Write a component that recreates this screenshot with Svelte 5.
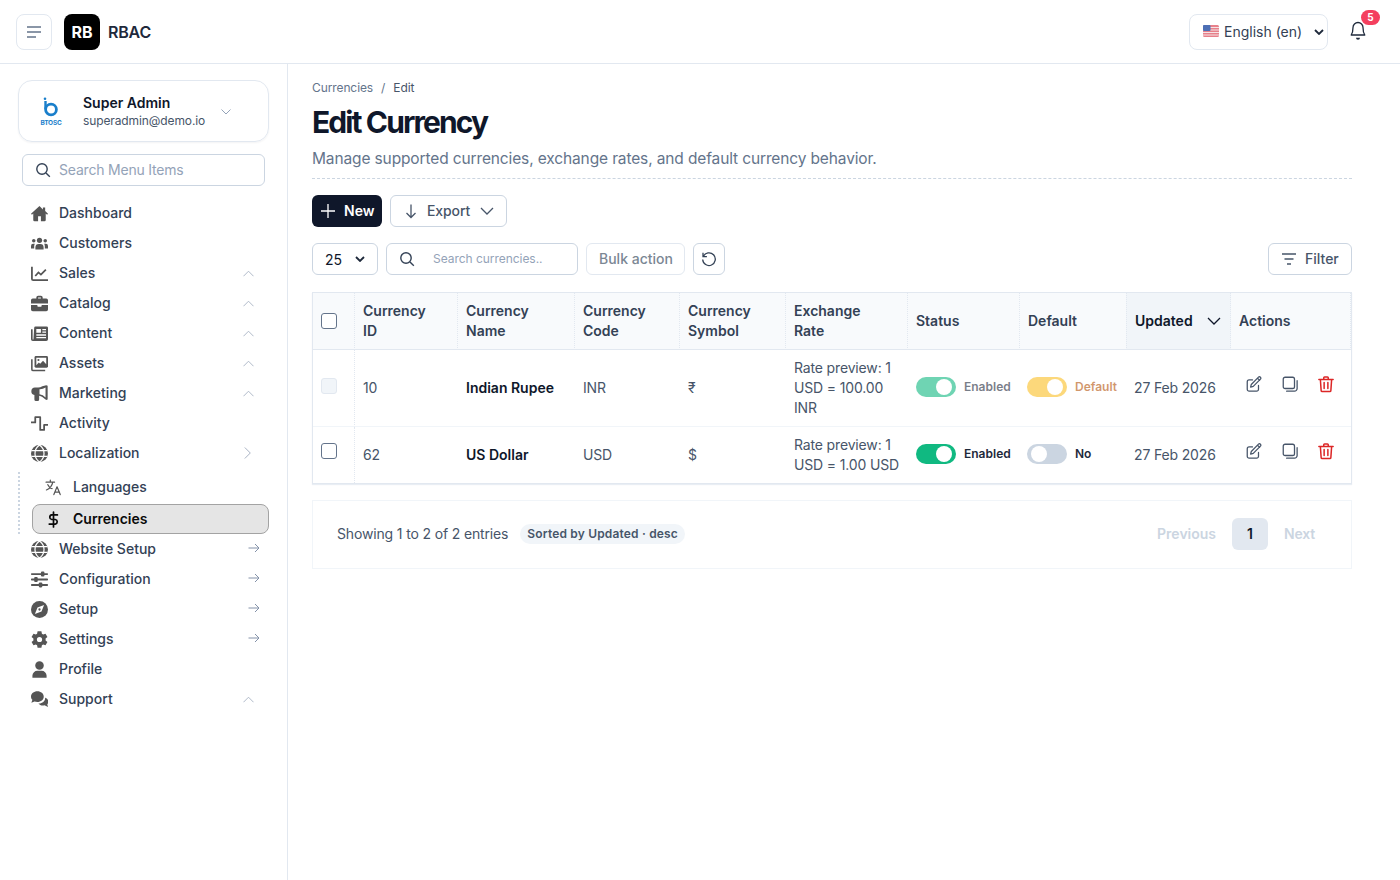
<script>
  const icons = {
    home: '<path fill="currentColor" d="M12 1.500 0 12.200l1.300 1.500 1.900-1.600V21a1.800 1.800 0 0 0 1.800 1.800h5V16h4v6.800h5a1.800 1.800 0 0 0 1.800-1.800v-8.900l1.900 1.600 1.300-1.500-4-3.600V3.500h-3.200v3Z"/>',
    users: '<g fill="currentColor"><circle cx="12" cy="7.500" r="3.700"/><path d="M6.200 20.500v-3A4.800 4.800 0 0 1 11 12.700h2a4.800 4.800 0 0 1 4.800 4.800v3Z"/><circle cx="3.900" cy="8" r="2.500"/><circle cx="20.100" cy="8" r="2.500"/><path d="M0 19v-3.500a3 3 0 0 1 3-3h2.400a6.500 6.500 0 0 0-.9 3.400V19ZM24 19v-3.500a3 3 0 0 0-3-3h-2.400a6.500 6.500 0 0 1 .9 3.400V19Z"/></g>',
    chart: '<path fill="none" stroke="currentColor" stroke-width="2.500" stroke-linejoin="round" d="M1.300 2.500v17.200a1.800 1.800 0 0 0 1.800 1.800H24"/><path fill="none" stroke="currentColor" stroke-width="2.500" d="m6 15.500 4.500-5 3.500 3 7-7"/>',
    brief: '<path fill="currentColor" d="M7.500 5V3.500A2.500 2.500 0 0 1 10 1h4a2.500 2.500 0 0 1 2.500 2.500V5h5A2.500 2.500 0 0 1 24 7.500V12H0V7.500A2.500 2.500 0 0 1 2.500 5ZM10 5h4V3.500h-4ZM0 14h9v1.500a1 1 0 0 0 1 1h4a1 1 0 0 0 1-1V14h9v6.500a2.500 2.500 0 0 1-2.500 2.500h-19A2.500 2.500 0 0 1 0 20.500Z"/>',
    news: '<path fill="currentColor" d="M6.500 2H22a2 2 0 0 1 2 2v16a2.500 2.500 0 0 1-2.500 2.500h-19A2.500 2.500 0 0 1 0 20V6h2.300v14a.6.6 0 0 0 1.200 0l1-16a2 2 0 0 1 2-2Z"/><path fill="#fff" d="M7.500 5.500h6.500V11H7.500ZM16 5.500h5.200v2H16ZM16 9h5.200v2H16ZM7.500 13h13.700v2H7.500ZM7.500 16.800h13.700v2H7.500Z"/>',
    images: '<path fill="currentColor" d="M7 1.500h15a2 2 0 0 1 2 2V16a2 2 0 0 1-2 2H7a2 2 0 0 1-2-2V3.500a2 2 0 0 1 2-2Z"/><path fill="#fff" d="M7.500 4h14v9l-4.500-5-4 4.500-2-2-3.500 4Z"/><circle cx="10.500" cy="7" r="1.500" fill="currentColor"/><path fill="none" stroke="currentColor" stroke-width="2.200" d="M1.200 6v14a2 2 0 0 0 2 2H20"/>',
    horn: '<path fill="currentColor" d="M23.500 1v19.500l-2 .8-5.500-4.300a10 10 0 0 0-4.500-1.900v5.400a2.200 2.200 0 0 1-2.200 2.200H7A2.200 2.200 0 0 1 4.800 20.500v-6.300A5.300 5.300 0 0 1 5.500 3.700h4.200a10 10 0 0 0 6.300-2L21.500.2Z"/><path fill="#fff" d="M12 6a13 13 0 0 0 8.500-2.500v14A13 13 0 0 0 12 13Z"/>',
    wave: '<path fill="none" stroke="currentColor" stroke-width="2.500" stroke-linejoin="round" d="M0 10.500h6V3h7v18h5.500v-7H24"/>',
    globe: '<circle cx="12" cy="12" r="12" fill="currentColor"/><path fill="none" stroke="#fff" stroke-width="1.700" d="M.5 8h23M.5 16h23M12 0c-8.500 6-8.500 18 0 24M12 0c8.500 6 8.500 18 0 24"/>',
    sliders: '<g fill="currentColor"><rect y="3" width="24" height="2.600" rx="1"/><rect y="10.700" width="24" height="2.600" rx="1"/><rect y="18.400" width="24" height="2.600" rx="1"/><rect x="14" y=".8" width="5" height="7" rx="1.500"/><rect x="4.500" y="8.500" width="5" height="7" rx="1.500"/><rect x="11" y="16.200" width="5" height="7" rx="1.500"/></g>',
    compass: '<circle cx="12" cy="12" r="12" fill="currentColor"/><path fill="#fff" d="m18.500 5.500-3.700 9.300-9.300 3.700 3.700-9.300Z"/><circle cx="12" cy="12" r="1.600" fill="currentColor"/>',
    gear: '<path fill="currentColor" fill-rule="evenodd" d="M9.300.5h5.400l.7 3.400 1.800 1 3.300-1.100 2.700 4.600-2.600 2.300v2.600l2.600 2.300-2.700 4.600-3.300-1.100-1.800 1-.7 3.400H9.300l-.7-3.400-1.800-1-3.300 1.100L.8 15.600l2.600-2.300v-2.600L.8 8.400l2.700-4.600 3.300 1.100 1.800-1ZM12 8.300a3.700 3.700 0 1 0 0 7.400 3.700 3.700 0 0 0 0-7.400Z"/>',
    user: '<circle cx="12" cy="6.500" r="6" fill="currentColor"/><path fill="currentColor" d="M2 23.500v-3A7 7 0 0 1 9 13.800h6a7 7 0 0 1 7 6.700v3Z"/>',
    chat: '<path fill="currentColor" d="M9 .5C4 .5 0 3.800 0 8c0 1.700.7 3.200 2 4.400L.5 16.500l4.500-1.800c1.200.4 2.600.7 4 .7 5 0 9-3.300 9-7.400S14 .5 9 .5Z"/><path fill="currentColor" d="M20 9.500c.2 4.800-4.200 8.500-9.500 8.100 1.300 1.800 3.500 2.900 6 2.900 1 0 1.800-.1 2.600-.4l4.900 2.400-1-3.800c1-1 1.500-2.200 1.500-3.700 0-2.300-1.600-4.400-4-5.500Z"/>',
    lang: '<g fill="none" stroke="currentColor" stroke-width="1.700" stroke-linejoin="round" stroke-linecap="round"><path d="M1.500 4.500h12M7.500 1.500v3M11 4.500c-1 5-4 9-9 11M4 8c1 2.500 3 4.500 6 5.500M12.500 22l4.500-11 4.500 11M14 18.500h6.500"/></g>',
    dollar: '<path fill="none" stroke="currentColor" stroke-width="2.400" stroke-linecap="round" d="M12 1.500v21M17.500 5.500H9.500a3.300 3.300 0 0 0 0 6.500h5a3.300 3.300 0 0 1 0 6.500H6"/>'
  };

  const upper = [
    { label: 'Dashboard', icon: 'home' },
    { label: 'Customers', icon: 'users' },
    { label: 'Sales', icon: 'chart', end: 'up' },
    { label: 'Catalog', icon: 'brief', end: 'up' },
    { label: 'Content', icon: 'news', end: 'up' },
    { label: 'Assets', icon: 'images', end: 'up' },
    { label: 'Marketing', icon: 'horn', end: 'up' },
    { label: 'Activity', icon: 'wave' },
    { label: 'Localization', icon: 'globe', end: 'right' }
  ];
  const lower = [
    { label: 'Website Setup', icon: 'globe', end: 'arrow' },
    { label: 'Configuration', icon: 'sliders', end: 'arrow' },
    { label: 'Setup', icon: 'compass', end: 'arrow' },
    { label: 'Settings', icon: 'gear', end: 'arrow' },
    { label: 'Profile', icon: 'user' },
    { label: 'Support', icon: 'chat', end: 'up' }
  ];

  const heads = [
    ['Currency', 'ID'], ['Currency', 'Name'], ['Currency', 'Code'], ['Currency', 'Symbol'], ['Exchange', 'Rate'], ['Status'], ['Default']
  ];

  const rows = [
    { id: 10, name: 'Indian Rupee', code: 'INR', sym: '₹', rate: 'Rate preview: 1 USD = 100.00 INR', locked: true, isDefault: true },
    { id: 62, name: 'US Dollar', code: 'USD', sym: '$', rate: 'Rate preview: 1 USD = 1.00 USD', locked: false, isDefault: false }
  ];
</script>

{#snippet navRow(item)}
  <div class="nav-row">
    <svg class="nav-icon" viewBox="0 0 24 24">{@html icons[item.icon]}</svg>
    <span>{item.label}</span>
    {#if item.end === 'up'}
      <svg class="end up" viewBox="0 0 12 7"><path d="M.5 6.500 6 1l5.500 5.500" /></svg>
    {:else if item.end === 'right'}
      <svg class="end side" viewBox="0 0 7 12"><path d="M.8.5 6.300 6 .8 11.500" /></svg>
    {:else if item.end === 'arrow'}
      <svg class="end arrow" viewBox="0 0 12 10"><path d="M.5 5h10.500M7 1l4 4-4 4" /></svg>
    {/if}
  </div>
{/snippet}

<div class="app">
  <header class="topbar">
    <button class="menu-btn" aria-label="Menu">
      <svg viewBox="0 0 16 12" width="16" height="12"><path d="M1 1h14M1 6h14M1 11h9" /></svg>
    </button>
    <div class="logo">RB</div>
    <div class="brand">RBAC</div>
    <div class="lang-select">
      <svg class="flag" viewBox="0 0 16 12" width="16" height="12">
        <rect width="16" height="12" rx="1.500" fill="#e7808a" />
        <path d="M0 2.500h16M0 5h16M0 7.500h16M0 10h16" stroke="#f5e3e5" stroke-width="1" />
        <rect width="7.500" height="6" rx="1" fill="#4d6fb5" />
      </svg>
      <span>English (en)</span>
      <svg class="sel-chev" viewBox="0 0 10 6" width="10" height="6"><path d="m1 1 4 4 4-4" /></svg>
    </div>
    <div class="bell">
      <svg viewBox="0 0 16 20" width="16" height="20"><path d="M8 1.500a5 5 0 0 0-5 5c0 4-.6 5.800-1.800 7.500h13.600C13.600 12.300 13 10.500 13 6.500a5 5 0 0 0-5-5Z" /><path class="clap" d="M6 16.800h4a2 2 0 0 1-4 0Z" /></svg>
      <span class="badge">5</span>
    </div>
  </header>

  <div class="body">
    <aside class="sidebar">
      <div class="profile">
        <div class="btosc">
          <svg viewBox="0 0 22 20" width="22" height="20">
            <circle cx="5" cy="1.700" r="1.300" fill="#1a7fcb" />
            <path d="M5.500 4v8" stroke="#1a7fcb" stroke-width="2.400" fill="none" />
            <circle cx="11" cy="12.500" r="5.400" stroke="#1a7fcb" stroke-width="2.800" fill="none" />
          </svg>
          <span>BTOSC</span>
        </div>
        <div class="who">
          <div class="who-name">Super Admin</div>
          <div class="who-mail">superadmin@demo.io</div>
        </div>
        <svg class="who-chev" viewBox="0 0 10 6" width="10" height="6"><path d="m.5.5 4.500 4.500L9.500.5" /></svg>
      </div>

      <label class="menu-search">
        <svg viewBox="0 0 16 16" width="16" height="16"><circle cx="7" cy="7" r="5.200" /><path d="m11 11 3.800 3.800" /></svg>
        <input placeholder="Search Menu Items" />
      </label>

      <nav class="nav">
        {#each upper as item}{@render navRow(item)}{/each}
        <div class="sub">
          <div class="sub-row">
            <svg class="nav-icon" viewBox="0 0 24 24">{@html icons.lang}</svg>
            <span>Languages</span>
          </div>
          <div class="sub-row active">
            <svg class="nav-icon" viewBox="0 0 24 24">{@html icons.dollar}</svg>
            <span>Currencies</span>
          </div>
        </div>
        {#each lower as item}{@render navRow(item)}{/each}
      </nav>
    </aside>

    <main class="main">
      <div class="crumbs"><span>Currencies</span><span class="slash">/</span><span class="here">Edit</span></div>
      <h1>Edit Currency</h1>
      <p class="sub-title">Manage supported currencies, exchange rates, and default currency behavior.</p>

      <div class="actions">
        <button class="btn primary">
          <svg viewBox="0 0 16 16" width="16" height="16"><path d="M8 1v14M1 8h14" /></svg>
          New
        </button>
        <button class="btn outline export">
          <svg viewBox="0 0 16 16" width="16" height="16"><path d="M8 1.500v13M3.500 10 8 14.500 12.500 10" /></svg>
          <span>Export</span>
          <svg viewBox="0 0 14 8" width="14" height="8"><path d="m1 1 6 6 6-6" /></svg>
        </button>
      </div>

      <div class="tools">
        <div class="btn outline per-page">
          <span>25</span>
          <svg viewBox="0 0 10 6" width="10" height="6"><path d="m1 1 4 4 4-4" /></svg>
        </div>
        <label class="table-search">
          <svg viewBox="0 0 16 16" width="16" height="16"><circle cx="7" cy="7" r="5.200" /><path d="m11 11 3.800 3.800" /></svg>
          <input placeholder="Search currencies.." />
        </label>
        <button class="btn bulk">Bulk action</button>
        <button class="btn outline reset" aria-label="Reset">
          <svg viewBox="0 0 16 16" width="16" height="16"><path d="M2.300 5.500A6.300 6.300 0 1 1 1.700 8.500M2 1.800v3.900h3.900" /></svg>
        </button>
        <button class="btn outline filter">
          <svg viewBox="0 0 16 12" width="16" height="12"><path d="M1 1h14M3.500 6h9M6 11h4" /></svg>
          <span>Filter</span>
        </button>
      </div>

      <div class="table-wrap">
        <table>
          <colgroup>
            <col /><col /><col /><col /><col /><col /><col /><col /><col /><col />
          </colgroup>
          <thead>
            <tr>
              <th><input type="checkbox" class="check" aria-label="Select all" /></th>
              {#each heads as h}
                <th>{#each h as word, i}{#if i}<br />{/if}{word}{/each}</th>
              {/each}
              <th class="sorted">
                <div class="sorted-in">
                  <span>Updated</span>
                  <svg viewBox="0 0 14 8" width="14" height="8"><path d="m1 1 6 6 6-6" /></svg>
                </div>
              </th>
              <th>Actions</th>
            </tr>
          </thead>
          <tbody>
            {#each rows as r}
              <tr>
                <td class="check-cell" class:top4={r.locked}>
                  <input type="checkbox" class="check" disabled={r.locked} aria-label="Select row" />
                </td>
                <td>{r.id}</td>
                <td class="name">{r.name}</td>
                <td>{r.code}</td>
                <td>{r.sym}</td>
                <td>{r.rate}</td>
                <td>
                  <div class="switch-line" class:dim={r.locked}>
                    <span class="switch green"><i></i></span>
                    <span class="sw-text">Enabled</span>
                  </div>
                </td>
                <td>
                  {#if r.isDefault}
                    <div class="switch-line dim">
                      <span class="switch amber"><i></i></span>
                      <span class="sw-text amber-t">Default</span>
                    </div>
                  {:else}
                    <div class="switch-line">
                      <span class="switch off"><i></i></span>
                      <span class="sw-text">No</span>
                    </div>
                  {/if}
                </td>
                <td>27 Feb 2026</td>
                <td>
                  <div class="row-acts">
                    <svg viewBox="0 0 24 24" width="18" height="18"><path d="M16.900 4.500 19.500 7M20.600 2.900a1.800 1.800 0 0 1 0 2.600L11 15.200l-3.500.9.900-3.500 9.600-9.700a1.800 1.800 0 0 1 2.600 0ZM18 14v5a2.500 2.500 0 0 1-2.500 2.500h-10A2.500 2.500 0 0 1 3 19V9a2.500 2.500 0 0 1 2.500-2.500H10" /></svg>
                    <svg viewBox="0 0 24 24" width="18" height="18"><rect x="3" y="3" width="15" height="15" rx="2.500" /><path d="M21.500 7.500V18a3.500 3.500 0 0 1-3.500 3.500H7.500" /></svg>
                    <svg class="del" viewBox="0 0 24 24" width="18" height="18"><path d="M2.500 6h19M9 6V3.500A1 1 0 0 1 10 2.500h4a1 1 0 0 1 1 1V6M4.500 6l1 14.500a1.500 1.500 0 0 0 1.500 1.500h10a1.500 1.500 0 0 0 1.500-1.500l1-14.500M9.500 10v8M14.500 10v8" /></svg>
                  </div>
                </td>
              </tr>
            {/each}
          </tbody>
        </table>
      </div>

      <div class="pager-card">
        <span class="showing">Showing 1 to 2 of 2 entries</span>
        <span class="sort-pill">Sorted by Updated · desc</span>
        <div class="pager">
          <span class="pg-link">Previous</span>
          <span class="pg-num">1</span>
          <span class="pg-link next">Next</span>
        </div>
      </div>
    </main>
  </div>
</div>

<style>
  :global(body) {
    margin: 0;
    background: #fff;
    font-family: Inter, "Liberation Sans", sans-serif;
    line-height: 20px;
    color: #334155;
  }
  * { box-sizing: border-box; }
  svg { display: block; flex: none; }
  button { font-family: inherit; line-height: 20px; }

  .app { height: 880px; overflow: hidden; display: flex; flex-direction: column; }

  .topbar {
    height: 64px;
    flex: none;
    display: flex;
    align-items: center;
    padding: 0 18px 0 16px;
    border-bottom: 1px solid #e2e8f0;
  }
  .menu-btn {
    width: 36px; height: 36px; padding: 0;
    display: flex; align-items: center; justify-content: center;
    background: #fff; border: 1px solid #e2e8f0; border-radius: 8px;
  }
  .menu-btn path { stroke: #64748b; stroke-width: 1.300; fill: none; }
  .logo {
    width: 36px; height: 36px; margin-left: 12px;
    background: #000; color: #fff; border-radius: 8px;
    display: flex; align-items: center; justify-content: center;
    font-size: 16px; font-weight: 700;
  }
  .brand { margin-left: 8px; font-size: 16px; font-weight: 600; color: #1e293b; letter-spacing: -.2px; }
  .lang-select {
    margin-left: auto;
    width: 139px; height: 36px;
    display: flex; align-items: center;
    padding-left: 13px;
    border: 1px solid #e2e8f0; border-radius: 8px;
    font-size: 14px; color: #334155;
  }
  .flag { margin-top: -2px; margin-right: 5px; }
  .sel-chev { margin-left: auto; margin-right: 3px; }
  .sel-chev path, .per-page path { fill: none; stroke: #1e293b; stroke-width: 1.800; }
  .bell { position: relative; margin-left: 22px; width: 32px; height: 36px; display: flex; align-items: center; }
  .bell svg { margin-top: -1px; }
  .bell path { fill: none; stroke: #1e293b; stroke-width: 1.300; stroke-linejoin: round; }
  .bell .clap { fill: #1e293b; stroke: none; }
  .badge {
    position: absolute; left: 11px; top: -4px;
    width: 19px; height: 15px; border-radius: 8px;
    background: #f43f5e; color: #fff;
    font-size: 10px; font-weight: 700; line-height: 15px; text-align: center;
  }

  .body { flex: 1; display: flex; min-height: 0; }

  .sidebar {
    width: 288px; flex: none;
    padding: 16px 18px 0;
    border-right: 1px solid #e2e8f0;
  }
  .profile {
    height: 62px;
    display: flex; align-items: center;
    padding-left: 21px;
    border: 1px solid #e2e8f0; border-radius: 14px;
    box-shadow: 0 1px 2px rgba(15, 23, 42, .05);
  }
  .btosc { width: 22px; display: flex; flex-direction: column; align-items: center; margin-top: 2px; }
  .btosc span { font-size: 6.500px; line-height: 8px; font-weight: 700; color: #1a7fcb; letter-spacing: -.2px; margin-top: 2px; }
  .who { margin-left: 21px; }
  .who-name { font-size: 14px; line-height: 20px; font-weight: 600; color: #0f172a; }
  .who-mail { font-size: 12px; line-height: 16px; color: #475569; letter-spacing: -.11px; }
  .who-chev { margin-left: 16px; margin-top: 2px; }
  .who-chev path { fill: none; stroke: #94a3b8; stroke-width: 1; }

  .menu-search {
    margin: 12px 4px;
    height: 32px;
    display: flex; align-items: center; gap: 8px;
    padding-left: 12px;
    border: 1px solid #cbd5e1; border-radius: 6px;
  }
  .menu-search svg, .table-search svg { fill: none; stroke: #334155; stroke-width: 1.400; }
  input:not([type]) {
    flex: 1; min-width: 0; border: 0; outline: 0; padding: 0; background: transparent;
    font-family: inherit; color: #334155; letter-spacing: -.2px; line-height: 20px;
  }
  input:not([type])::placeholder { color: #94a3b8; opacity: 1; }
  .menu-search input { font-size: 14px; }

  .nav-row {
    height: 30px;
    display: flex; align-items: center; gap: 11px;
    padding-left: 13px;
    font-size: 14px; font-weight: 500; color: #334155;
    position: relative;
  }
  .nav-icon { width: 17px; height: 17px; color: #555; }
  .end { position: absolute; fill: none; }
  .up { left: 225px; top: 12px; width: 11px; height: 7px; stroke: #a8b3c4; stroke-width: 1; }
  .side { left: 226px; top: 9px; width: 7px; height: 12px; stroke: #a8b3c4; stroke-width: 1; }
  .arrow { left: 230px; top: 9px; width: 12px; height: 10px; stroke: #8492a9; stroke-width: 1; }

  .sub {
    margin-top: 4px;
    padding-left: 12px;
    border-left: 2px dotted #cbd5e1;
    display: flex; flex-direction: column; gap: 2px;
  }
  .sub-row {
    height: 30px;
    display: flex; align-items: center; gap: 11px;
    padding-left: 12px;
    font-size: 14px; font-weight: 500; color: #334155;
    border: 1px solid transparent; border-radius: 8px;
  }
  .sub-row.active { background: #e5e5e5; border-color: #a3a3a3; color: #0a0a0a; font-weight: 600; }
  .sub-row.active .nav-icon { color: #0a0a0a; }

  .main { flex: 1; min-width: 0; padding: 16px 48px 0 24px; }
  .crumbs { display: flex; gap: 8px; font-size: 12px; line-height: 16px; color: #64748b; letter-spacing: -.1px; }
  .here { color: #475569; }
  h1 {
    margin: 8px 0 0;
    font-size: 30px; line-height: 36px; font-weight: 700;
    letter-spacing: -1.900px; color: #0f172a;
  }
  .sub-title {
    margin: 7px 0 0;
    padding-bottom: 7px;
    border-bottom: 1px dashed #cbd5e1;
    font-size: 15.500px; line-height: 24px; color: #64748b; letter-spacing: -.13px;
  }

  .actions { margin-top: 16px; display: flex; gap: 8px; }
  .btn {
    height: 32px;
    display: flex; align-items: center;
    font-size: 14px; font-weight: 500;
    border-radius: 6px; background: #fff; padding: 0;
  }
  .btn svg { fill: none; stroke: currentColor; stroke-width: 1.300; }
  .outline { border: 1px solid #cbd5e1; color: #475569; }
  .primary { width: 70px; padding-left: 8px; gap: 8px; background: #0f172a; color: #fff; border: 0; font-weight: 600; }
  .export { width: 117px; padding-left: 12px; gap: 8px; }
  .export span { letter-spacing: -.1px; margin-right: 2px; }

  .tools { margin-top: 16px; display: flex; gap: 8px; }
  .per-page { width: 66px; padding: 0 12px; justify-content: space-between; color: #0f172a; font-weight: 400; }
  .per-page span { margin-top: 1px; }
  .table-search {
    width: 192px; height: 32px;
    display: flex; align-items: center; gap: 18px;
    padding-left: 12px;
    border: 1px solid #cbd5e1; border-radius: 6px;
  }
  .table-search input { font-size: 12px; letter-spacing: -.04px; }
  .bulk { width: 99px; padding-left: 12px; border: 1px solid #e2e8f0; color: #7b8794; }
  .reset { width: 32px; justify-content: center; color: #334155; }
  .filter { width: 84px; margin-left: auto; padding-left: 12px; gap: 8px; }

  .table-wrap { margin-top: 17px; border: 1px solid #e2e8f0; box-shadow: 0 1px 1px #e9eef4; }
  table { width: 1038px; border-collapse: separate; border-spacing: 0; table-layout: fixed; font-size: 14px; line-height: 20px; }
  col:nth-child(1) { width: 41px; }
  col:nth-child(2) { width: 104px; }
  col:nth-child(3) { width: 117px; }
  col:nth-child(4) { width: 105px; }
  col:nth-child(5) { width: 106px; }
  col:nth-child(6) { width: 122px; }
  col:nth-child(7) { width: 111px; }
  col:nth-child(8) { width: 107px; }
  col:nth-child(9) { width: 105px; }
  col:nth-child(10) { width: 120px; }
  th {
    padding: 8px;
    height: 57px;
    background: #f8fafc;
    border-bottom: 1px solid #e2e8f0;
    border-right: 1px dotted #e2e8f0;
    font-weight: 600; color: #334155; text-align: left;
  }
  th:nth-child(1), th:nth-child(7), th:nth-child(8) { border-right: 0; }
  th:nth-child(2), th:nth-child(8), th:nth-child(9) { border-left: 1px dotted #e2e8f0; }
  th.sorted { background: #f1f5f9; color: #0f172a; }
  .sorted-in { display: flex; align-items: center; justify-content: space-between; padding-right: 1px; }
  .sorted-in svg { fill: none; stroke: #0f172a; stroke-width: 1.300; }
  td { padding: 8px; color: #475569; border-bottom: 1px solid #f1f5f9; vertical-align: middle; letter-spacing: -.15px; }
  tr:last-child td { border-bottom: 0; }
  td:nth-child(2) { border-left: 1px dotted #e2e8f0; }
  td.name { font-weight: 600; color: #0f172a; letter-spacing: 0; }
  .check {
    appearance: none;
    display: block;
    width: 16px; height: 16px; margin: 0;
    border: 1px solid #64748b; border-radius: 3px; background: #fff;
  }
  .check:disabled { border-color: #e2e8f0; background: #f1f5f9; }
  .check-cell .check { margin-bottom: 8px; }
  .check-cell.top4 .check { margin-bottom: 4px; }

  .switch-line { display: flex; align-items: center; gap: 8px; margin-bottom: 2px; letter-spacing: 0; }
  .switch { position: relative; width: 40px; height: 20px; border-radius: 10px; flex: none; }
  .switch i { position: absolute; top: 2px; left: 20px; width: 16px; height: 16px; border-radius: 50%; background: #fff; }
  .switch.off i { left: 4px; }
  .green { background: #10b981; }
  .amber { background: #fbbf24; }
  .off { background: #cbd5e1; }
  .sw-text { font-size: 12px; line-height: 16px; font-weight: 600; color: #1e293b; white-space: nowrap; }
  .amber-t { color: #b45309; }
  .dim .switch { opacity: .6; }
  .dim .sw-text { opacity: .6; }

  .row-acts { display: flex; gap: 18px; padding-left: 6px; margin-bottom: 8px; }
  .row-acts svg { fill: none; stroke: #475569; stroke-width: 1.700; stroke-linecap: round; stroke-linejoin: round; }
  .row-acts svg.del { stroke: #dc2626; stroke-width: 2; }

  .pager-card {
    margin-top: 16px;
    height: 69px;
    display: flex; align-items: center;
    padding: 0 36px 2px 24px;
    border: 1px solid #f1f5f9;
  }
  .showing { font-size: 14px; color: #475569; letter-spacing: -.15px; }
  .sort-pill {
    margin-left: 12px;
    height: 20px; padding: 0 7px;
    border-radius: 10px; background: #f1f5f9;
    font-size: 12px; line-height: 20px; font-weight: 600; color: #475569; letter-spacing: .17px;
  }
  .pager { margin-left: auto; display: flex; align-items: center; gap: 16px; }
  .pg-link { font-size: 14px; font-weight: 600; color: #cbd5e1; }
  .next { letter-spacing: -.2px; }
  .pg-num {
    width: 36px; height: 32px; border-radius: 6px;
    background: #e2e8f0; color: #0f172a;
    display: flex; align-items: center; justify-content: center;
    font-size: 14px; font-weight: 600;
  }
</style>
